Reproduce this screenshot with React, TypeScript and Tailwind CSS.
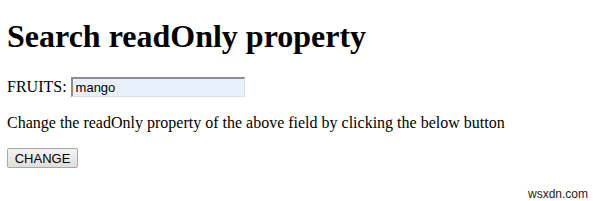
import React, { useState } from 'react';

export default function App() {
    const [readOnly, setReadOnly] = useState(true);

    return (
        <div className="w-[600px] h-[201px] bg-white text-black overflow-hidden" style={{ fontFamily: '"Liberation Serif", "Times New Roman", serif' }}>
            <div className="pl-[7px]">
                <h1 className="mt-[20px] h-8 text-[32px] leading-8 font-bold">Search readOnly property</h1>

                <div className="mt-[25px] flex items-center h-5 text-base leading-5">
                    <span>FRUITS:&nbsp;</span>
                    <input
                        type="text"
                        defaultValue="mango"
                        readOnly={readOnly}
                        className="w-[174px] h-5 pl-[3px] bg-[#e8f0fe] border-t-2 border-l-2 border-b border-r border-t-[#8e8e8e] border-l-[#8e8e8e] border-b-[#dedede] border-r-[#dedede] text-[13px] leading-[15px] text-black outline-none"
                        style={{ fontFamily: '"Liberation Sans", Arial, sans-serif' }}
                    />
                </div>

                <p className="mt-4 text-base leading-5">
                    Change the readOnly property of the above field by clicking the below button
                </p>

                <button
                    onClick={() => setReadOnly(!readOnly)}
                    className="mt-[15px] block w-[71px] h-5 border border-[#a8a8a8] rounded-[2px] bg-gradient-to-b from-[#f4f4f4] to-[#dedede] text-[13px] leading-[15px] text-black"
                    style={{ fontFamily: '"Liberation Sans", Arial, sans-serif' }}
                >
                    CHANGE
                </button>
            </div>

            <div className="mt-[19px] flex justify-end pr-[12px]">
                <span className="text-[12px] leading-[15px] text-[#222]" style={{ fontFamily: '"Liberation Sans", Arial, sans-serif' }}>
                    wsxdn.com
                </span>
            </div>
        </div>
    );
}
